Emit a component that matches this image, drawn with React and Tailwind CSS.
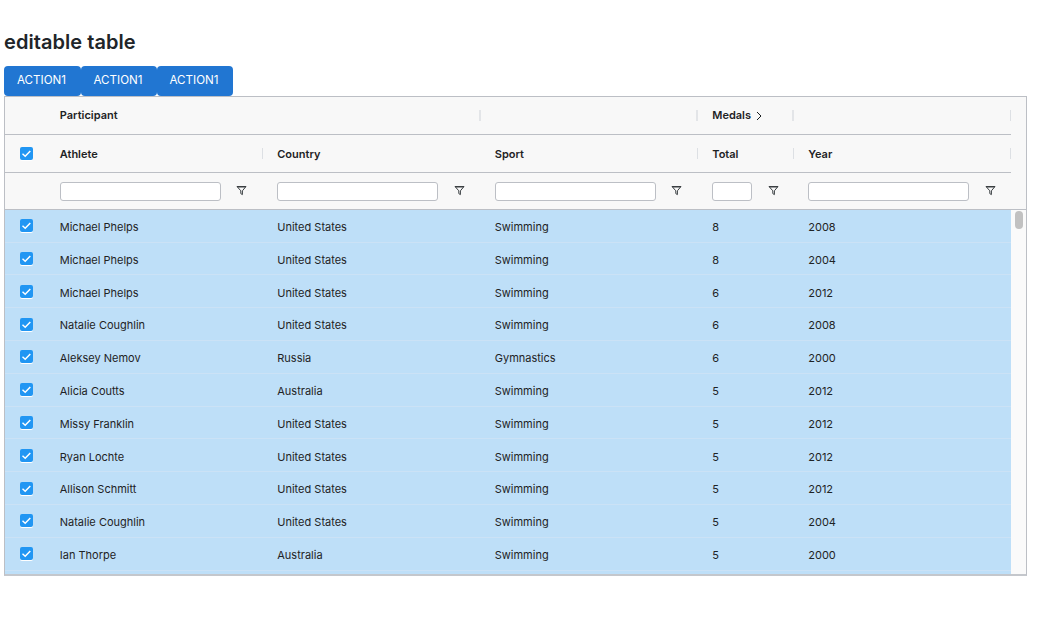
import React from "react";

const rows = [
  ["Michael Phelps", "United States", "Swimming", "8", "2008"],
  ["Michael Phelps", "United States", "Swimming", "8", "2004"],
  ["Michael Phelps", "United States", "Swimming", "6", "2012"],
  ["Natalie Coughlin", "United States", "Swimming", "6", "2008"],
  ["Aleksey Nemov", "Russia", "Gymnastics", "6", "2000"],
  ["Alicia Coutts", "Australia", "Swimming", "5", "2012"],
  ["Missy Franklin", "United States", "Swimming", "5", "2012"],
  ["Ryan Lochte", "United States", "Swimming", "5", "2012"],
  ["Allison Schmitt", "United States", "Swimming", "5", "2012"],
  ["Natalie Coughlin", "United States", "Swimming", "5", "2004"],
  ["Ian Thorpe", "Australia", "Swimming", "5", "2000"],
  ["", "", "", "", ""],
];

const widths = ["w-[217.5px]", "w-[217.5px]", "w-[217.5px]", "w-[96px]", "w-[216.75px]"];

function Check() {
  return (
    <span className="flex h-[13px] w-[13px] items-center justify-center rounded-[2px] bg-[#2196f3] shadow-[0_1px_0_#ffffff]">
      <svg width="11" height="11" viewBox="0 0 11 11" fill="none" stroke="#ffffff" strokeWidth="1.5">
        <path d="M1.5 5.8 L4.2 8.2 L9.3 3" />
      </svg>
    </span>
  );
}

function Funnel() {
  return (
    <svg width="11" height="11" viewBox="0 0 11 11" fill="none" stroke="#3a3f42" strokeWidth="1">
      <path d="M1 1.5 H10 L6.4 5.8 V9.6 L4.8 8.6 V5.8 Z" strokeLinejoin="round" />
      <path d="M1.5 1.8 H9.5" strokeWidth="1.4" />
    </svg>
  );
}

function Sep({ thick }) {
  return <span className={`h-[11px] shrink-0 ${thick ? "w-[2px] bg-[#e3e5e8]" : "w-px bg-[#dde0e4]"}`} />;
}

function HeaderCell({ w, children, sep, thick, className = "" }) {
  return (
    <div className={`flex h-full items-center justify-between pl-[14px] ${w}`}>
      <div className={`flex items-center ${className}`}>{children}</div>
      {sep && <Sep thick={thick} />}
    </div>
  );
}

function Button({ w }) {
  return (
    <button className={`h-[30px] rounded-[4px] bg-[#2176d2] pb-[1px] pr-[2px] text-center text-[11.6px] text-white ${w}`}>
      ACTION1
    </button>
  );
}

export default function App() {
  return (
    <div className="min-h-[642px] bg-white pl-1 pt-[30px] font-['Inter',sans-serif] text-[#1e2325]">
      <h1 className="mb-[11px] text-[20px] font-semibold leading-[25px] tracking-[0.05px] text-[#212529]">editable table</h1>
      <div className="flex">
        <Button w="w-[77px]" />
        <Button w="w-[76px]" />
        <Button w="w-[76px]" />
      </div>
      <div className="h-[480px] w-[1023px] overflow-hidden border border-[#bcbfc5] border-b-2 border-b-[#c4c7cc] bg-[#f8f8f8]">
        <div className="w-[1006px]">
          <div className="flex h-[38px] items-center border-b border-[#bcbfc5] text-[11px] font-semibold">
            <div className="h-full w-[40.75px]" />
            <HeaderCell w="w-[435px]" sep thick>Participant</HeaderCell>
            <HeaderCell w="w-[217.5px]" sep thick />
            <HeaderCell w="w-[96px]" sep thick>
              Medals
              <svg className="ml-[4px]" width="8" height="10" viewBox="0 0 8 10" fill="none" stroke="#181d1f" strokeWidth="1">
                <path d="M2 1 L6 5 L2 9" />
              </svg>
            </HeaderCell>
            <HeaderCell w="w-[216.75px]" sep />
          </div>
          <div className="flex h-[38px] items-center border-b border-[#bcbfc5] text-[11px] font-semibold">
            <div className="flex h-full w-[40.75px] items-center pl-[14.5px]">
              <Check />
            </div>
            {["Athlete", "Country", "Sport", "Total", "Year"].map((t, i) => (
              <HeaderCell key={t} w={widths[i]} sep={i !== 1} className="pt-[2px]">{t}</HeaderCell>
            ))}
          </div>
        </div>
        <div className="flex h-[36.8px] items-center border-b border-[#bcbfc5]">
          <div className="h-full w-[40.75px]" />
          {widths.map((w, i) => (
            <div key={i} className={`flex h-full items-center pl-[14px] pt-[1px] ${w}`}>
              <input
                type="text"
                className={`h-[19px] rounded-[3px] border border-[#bcbfc5] bg-white ${i === 3 ? "w-[40px]" : "w-[161px]"}`}
              />
              <span className="mb-[2px] ml-[15.5px] flex"><Funnel /></span>
            </div>
          ))}
        </div>
        <div className="flex">
          <div className="w-[1006px] shrink-0">
            {rows.map((r, i) => (
              <div key={i} className="flex h-[32.8px] items-center border-b border-[#cbe2f6] bg-[#bedff8] text-[11px]">
                <div className="flex h-full w-[40.75px] items-center pl-[14.5px]">
                  {r[0] && <Check />}
                </div>
                {r.map((c, j) => (
                  <div key={j} className={`pl-[14px] pt-[3px] ${widths[j]}`}>{c}</div>
                ))}
              </div>
            ))}
          </div>
          <div className="flex-1 bg-[#fafafa] pt-[1px]">
            <div className="ml-[4px] h-[18px] w-[8px] rounded-[4px] bg-[#c1c1c1]" />
          </div>
        </div>
      </div>
    </div>
  );
}
